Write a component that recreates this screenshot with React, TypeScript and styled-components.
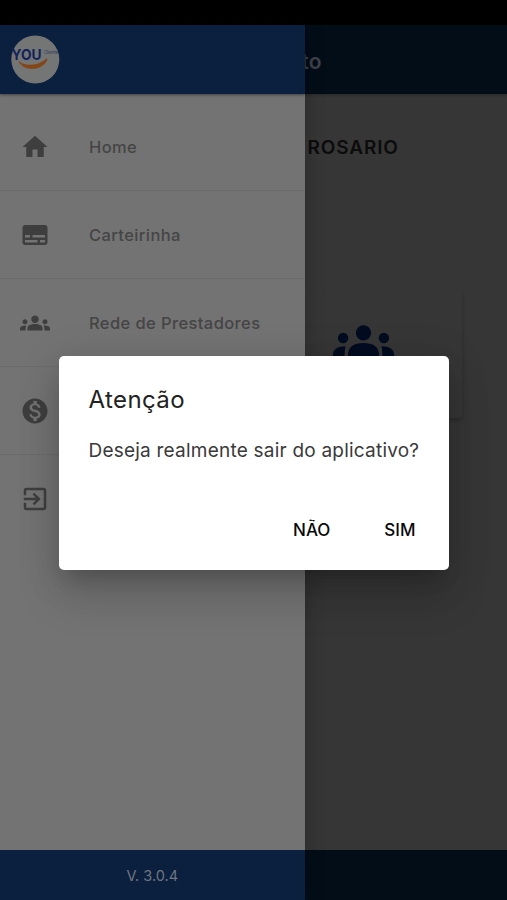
import React from 'react';
import styled, { createGlobalStyle } from 'styled-components';
import { MdHome, MdSubtitles, MdGroups, MdMonetizationOn, MdExitToApp } from 'react-icons/md';

const GlobalStyle = createGlobalStyle`
  * { box-sizing: border-box; }
  body { margin: 0; background: #000; font-family: Inter, Roboto, sans-serif; }
`;

const Screen = styled.div`
  position: relative;
  width: 507px;
  height: 900px;
  overflow: hidden;
  background: #000;
  padding-top: 25px;
`;

const Page = styled.main`
  height: 875px;
  display: flex;
  flex-direction: column;
  background: #363636;
`;

const PageHeader = styled.header`
  height: 69px;
  flex: none;
  display: flex;
  align-items: center;
  justify-content: flex-end;
  padding: 3px 185px 0 0;
  background: #030d18;
  box-shadow: 0 1px 3px rgba(0, 0, 0, 0.25);
  color: #3e4248;
  font-size: 21px;
  font-weight: 600;
  letter-spacing: 0.4px;
`;

const PageBody = styled.div`
  flex: 1;
  padding: 41px 45px 0 307.5px;
`;

const Member = styled.div`
  color: #0c0c0c;
  font-size: 19px;
  line-height: 26px;
  font-weight: 600;
  letter-spacing: 0.85px;
`;

const Card = styled.section`
  margin: 129px 0 0 -44px;
  height: 128px;
  padding: 35px 0 0 69px;
  border-radius: 4px;
  box-shadow: 1px 3px 5px -1px rgba(0, 0, 0, 0.22);
  svg { display: block; }
`;

const PageFooter = styled.footer`
  height: 50px;
  flex: none;
  background: #030d18;
`;

const Drawer = styled.aside`
  position: absolute;
  top: 25px;
  left: 0;
  width: 304.5px;
  height: 875px;
  display: flex;
  flex-direction: column;
  background: #737373;
  box-shadow: 0 0 18px rgba(0, 0, 0, 0.25);
`;

const DrawerHeader = styled.header`
  height: 69px;
  flex: none;
  display: flex;
  align-items: center;
  padding-left: 11px;
  background: #0b1f3f;
  box-shadow: 0 1px 3px rgba(0, 0, 0, 0.45);
`;

const Menu = styled.nav`
  flex: 1;
  padding-top: 9px;
`;

const MenuRow = styled.div<{ $last?: boolean }>`
  height: 88px;
  display: flex;
  align-items: center;
  padding-left: 20px;
  border-bottom: 1px solid ${p => (p.$last ? 'transparent' : '#6c6c6c')};
  color: #3e3e3e;
  svg { width: 30px; height: 30px; flex: none; }
`;

const Label = styled.span`
  margin-left: 39px;
  color: #454545;
  font-size: 16.5px;
  font-weight: 500;
  letter-spacing: 0.4px;
  white-space: nowrap;
`;

const Version = styled.footer`
  height: 50px;
  flex: none;
  display: flex;
  align-items: center;
  justify-content: center;
  background: #0b1f3f;
  color: #6f767f;
  font-size: 14.5px;
  letter-spacing: 0;
`;

const Dialog = styled.div`
  position: absolute;
  left: 59px;
  top: 356px;
  width: 390px;
  height: 214px;
  display: flex;
  flex-direction: column;
  padding: 29px 8px 20px 29.5px;
  border-radius: 5px;
  background: #fff;
  box-shadow: 0 14px 19px -8px rgba(0, 0, 0, 0.18), 0 28px 44px 2px rgba(0, 0, 0, 0.12),
    0 6px 40px 4px rgba(0, 0, 0, 0.1);
`;

const DialogTitle = styled.h2`
  margin: 0;
  color: #222;
  font-size: 24px;
  line-height: 30px;
  font-weight: 400;
  letter-spacing: 0.4px;
`;

const Message = styled.p`
  margin: 23px 0 0;
  color: #3a3a3a;
  font-size: 19px;
  line-height: 26px;
  letter-spacing: 0.22px;
  white-space: nowrap;
`;

const Actions = styled.div`
  margin-top: auto;
  display: flex;
  justify-content: flex-end;
  gap: 22px;
`;

const ActionButton = styled.button`
  height: 40px;
  padding: 0 16px;
  border: 0;
  background: none;
  color: #0a0a0a;
  font: 500 17px Inter, sans-serif;
  letter-spacing: 0;
  &:last-child { padding-right: 25.5px; }
`;

const Logo = () => (
  <svg width="49" height="49" viewBox="0 0 49 49" aria-label="You">
    <circle cx="24.3" cy="24.5" r="24" fill="#747675" />
    <text x="0.6" y="25.2" textLength="30" lengthAdjust="spacingAndGlyphs" fontFamily="Inter, sans-serif" fontWeight="700" fontSize="14.8" fill="#13225b">YOU</text>
    <text x="33" y="18.6" textLength="14" lengthAdjust="spacingAndGlyphs" fontFamily="Inter, sans-serif" fontWeight="500" fontSize="4.5" fill="#344063">Cliente</text>
    <path d="M7.2 26Q9.5 27 11 28.2Q22 32.5 33.5 25.2L35.8 23.2L36.5 25.2Q31 34 20.5 34Q11 33.5 7.2 26Z" fill="#844617" />
  </svg>
);

const PeopleIcon = () => (
  <svg width="62" height="48" viewBox="0 0 62 48" fill="#020c20">
    <circle cx="30.5" cy="7.8" r="7.6" />
    <circle cx="10.1" cy="13" r="5.2" />
    <circle cx="50.9" cy="13" r="5.2" />
    <path d="M15 34V29Q16 18 30.5 18T46 29V34Z" />
    <path d="M0 34V29Q1 21 12.5 21.2Q11.5 25 11.5 34Z" />
    <path d="M61 34V29Q60 21 48.5 21.2Q49.5 25 49.5 34Z" />
  </svg>
);

const items = [
  { Icon: MdHome, label: 'Home' },
  { Icon: MdSubtitles, label: 'Carteirinha' },
  { Icon: MdGroups, label: 'Rede de Prestadores' },
  { Icon: MdMonetizationOn, label: '' },
  { Icon: MdExitToApp, label: '' },
];

export default function App() {
  return (
    <>
      <GlobalStyle />
      <Screen>
        <Page>
          <PageHeader>to</PageHeader>
          <PageBody>
            <Member>ROSARIO</Member>
            <Card><PeopleIcon /></Card>
          </PageBody>
          <PageFooter />
        </Page>
        <Drawer>
          <DrawerHeader><Logo /></DrawerHeader>
          <Menu>
            {items.map(({ Icon, label }, i) => (
              <MenuRow key={i} $last={i === items.length - 1}>
                <Icon />
                {label && <Label>{label}</Label>}
              </MenuRow>
            ))}
          </Menu>
          <Version>V. 3.0.4</Version>
        </Drawer>
        <Dialog role="dialog">
          <DialogTitle>Atenção</DialogTitle>
          <Message>Deseja realmente sair do aplicativo?</Message>
          <Actions>
            <ActionButton>NÃO</ActionButton>
            <ActionButton>SIM</ActionButton>
          </Actions>
        </Dialog>
      </Screen>
    </>
  );
}
